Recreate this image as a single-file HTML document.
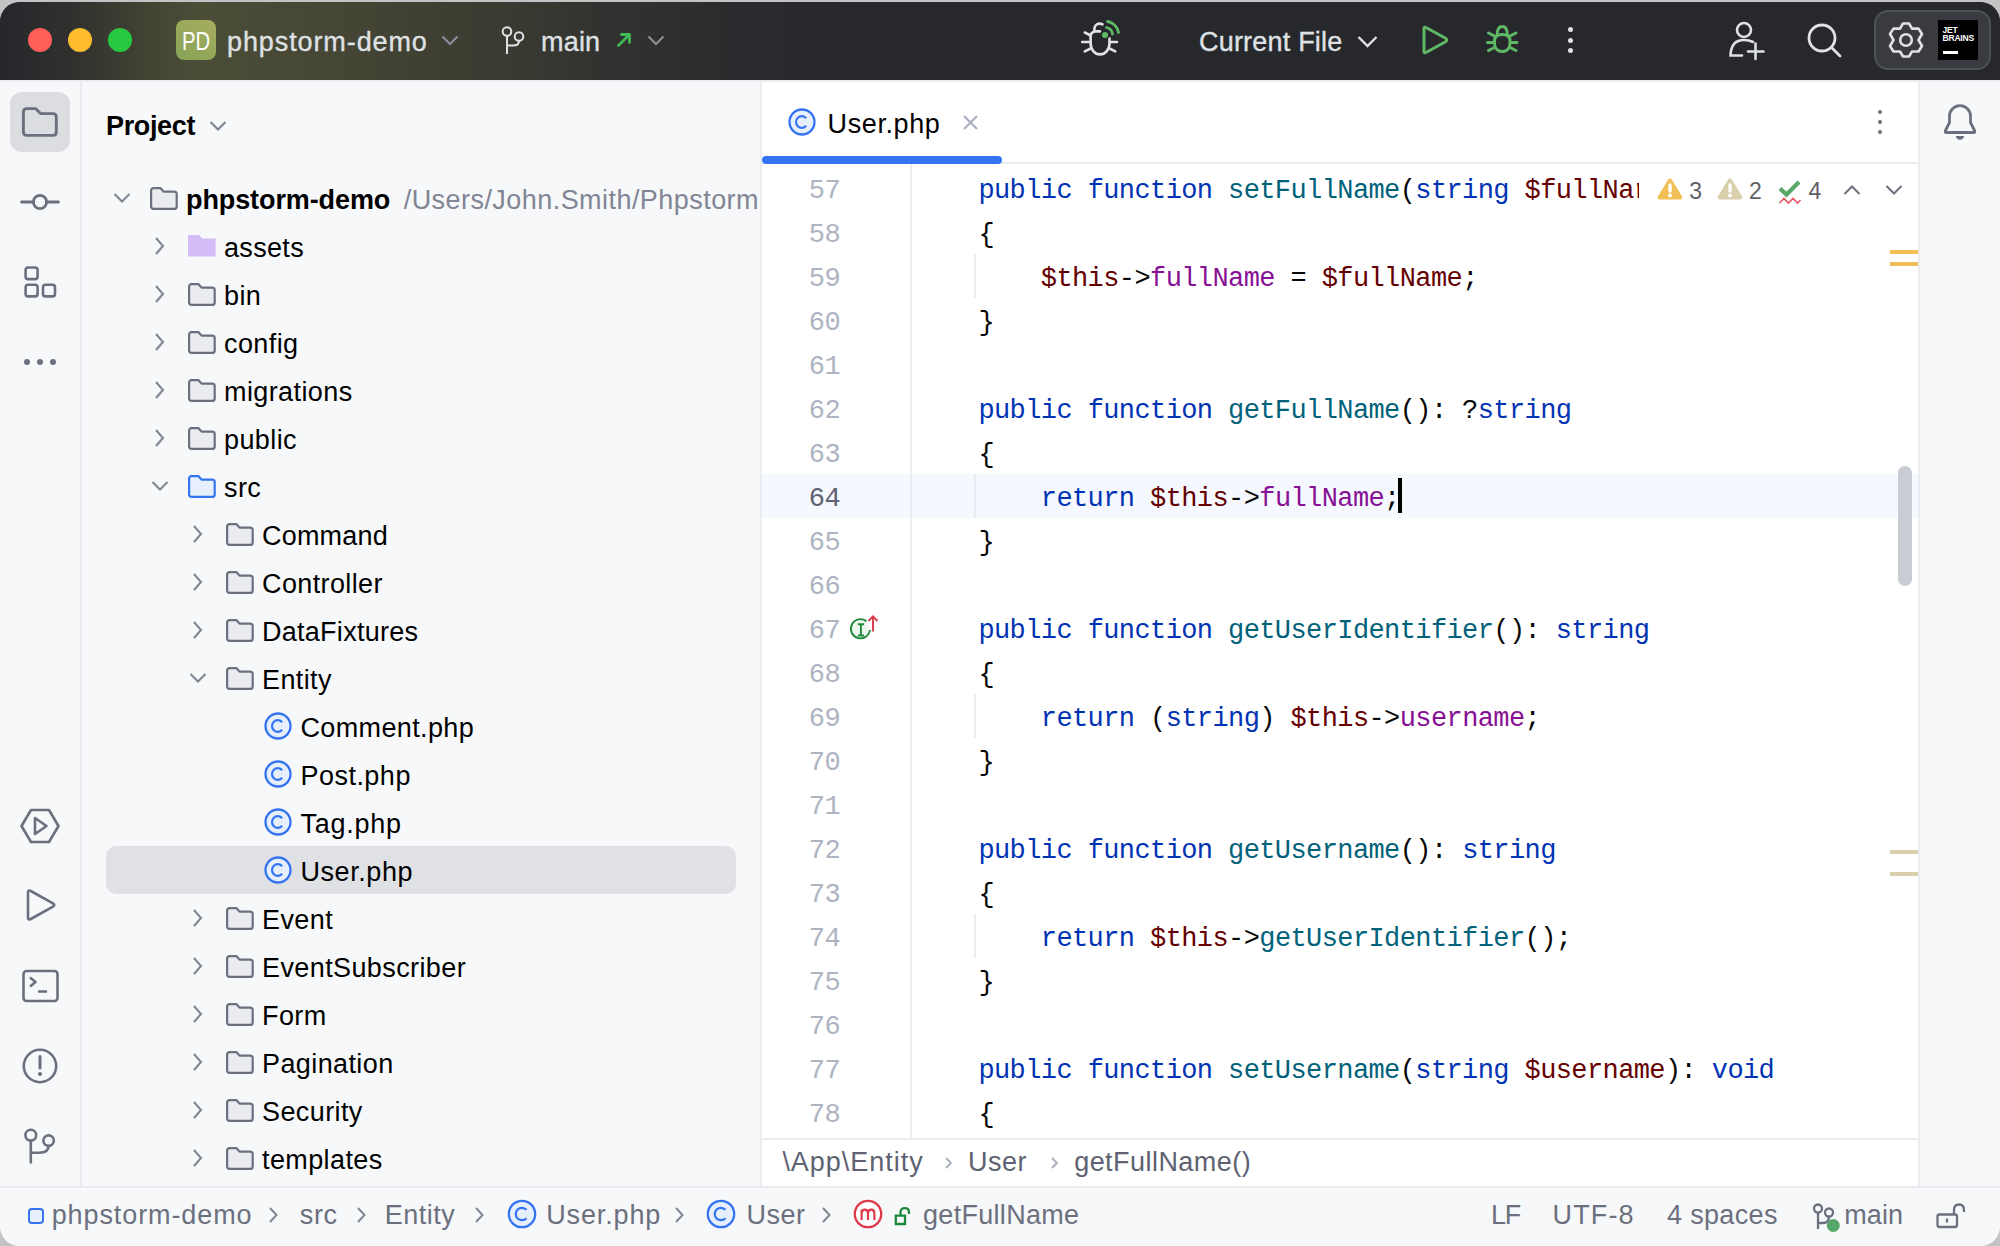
<!DOCTYPE html>
<html><head><meta charset="utf-8">
<style>
*{box-sizing:border-box;margin:0;padding:0}
html,body{width:2000px;height:1246px;overflow:hidden;background:#c3c3c5}
body{font-family:"Liberation Sans",sans-serif;position:relative}
.win{position:absolute;left:0;top:2px;width:2000px;height:1244px;border-radius:20px;overflow:hidden;background:#f7f8fa}
.abs{position:absolute}
.t{position:absolute;white-space:pre;font-size:27px;line-height:30px}
#title{position:absolute;left:0;top:-2px;width:2000px;height:80px;background:#27282c}
#titleglow{position:absolute;left:0;top:0;width:2000px;height:80px;background:linear-gradient(90deg,#26272c 0px,#2f302e 70px,#434433 150px,#4c4d37 200px,#484935 280px,#414233 400px,#3a3b31 500px,#323330 600px,#2b2c2e 720px,#27282c 850px)}
.tl{position:absolute;top:28px;width:24px;height:24px;border-radius:50%}
.lt{color:#dfe1e5;-webkit-text-stroke:0.35px #dfe1e5}
#strip{position:absolute;z-index:2;left:0;top:78px;width:82px;height:1106px;background:#f7f8fa;border-right:2px solid #ebecf0}
#proj{position:absolute;left:81px;top:78px;width:681px;height:1106px;background:#f7f8fa;border-right:2px solid #ebecf0;overflow:hidden}
#editor{position:absolute;left:762px;top:78px;width:1156px;height:1106px;background:#fff;overflow:hidden}
#rstrip{position:absolute;left:1918px;top:78px;width:82px;height:1106px;background:#f7f8fa;border-left:2px solid #ebecf0}
#status{position:absolute;left:0;top:1184px;width:2000px;height:60px;background:#f7f8fa;border-top:2px solid #ebecf0}
.tree{color:#000}
.code{position:absolute;white-space:pre;font-family:"Liberation Mono",monospace;font-size:27px;letter-spacing:-0.6px;line-height:44px;color:#080808}
.kw{color:#0033b3}.fn{color:#00627a}.va{color:#660000}.pr{color:#871094}
.ln{position:absolute;left:0;width:76px;text-align:right;font-family:"Liberation Mono",monospace;font-size:27px;letter-spacing:-0.6px;line-height:44px;color:#aeb3c2}
.st{color:#6c707e}
</style></head><body>
<div class="win">
 <div id="title"><div id="titleglow"></div>
  <div class="tl" style="left:28px;background:#ff5f57"></div>
  <div class="tl" style="left:68px;background:#febc2e"></div>
  <div class="tl" style="left:108px;background:#28c840"></div>
  <div class="abs" style="left:176px;top:20px;width:40px;height:40px;border-radius:8px;background:linear-gradient(30deg,#87a357 0%,#a7ad5e 100%)"></div>
  <div class="t" style="left:176px;top:26px;width:40px;text-align:center;color:#fff;font-size:26px;transform:scaleX(0.78);letter-spacing:0px">PD</div>
  <div class="t lt" style="left:227px;top:26.5px;letter-spacing:0.9px">phpstorm-demo</div>
  <svg class="abs" style="left:440px;top:32px" width="20" height="16" viewBox="0 0 20 16"><path d="M2.5 4.5 L10 12 L17.5 4.5" fill="none" stroke="#8b8e99" stroke-width="2.2"/></svg>
  <svg class="abs" style="left:498px;top:24px" width="32" height="34" viewBox="0 0 32 34"><circle cx="9" cy="7.5" r="4.3" fill="none" stroke="#dfe1e5" stroke-width="2"/><circle cx="21" cy="12.5" r="4.3" fill="none" stroke="#dfe1e5" stroke-width="2"/><path d="M9 12 V30 M9 21.5 H15 Q21 21.5 21 17" fill="none" stroke="#dfe1e5" stroke-width="2"/></svg>
  <div class="t lt" style="left:541px;top:26.5px;letter-spacing:0.2px">main</div>
  <svg class="abs" style="left:614px;top:30px" width="20" height="20" viewBox="0 0 20 20"><path d="M4.5 15.5 L15 5 M7.5 4.5 H15.5 V12.5" fill="none" stroke="#3fb856" stroke-width="2.8" stroke-linecap="round" stroke-linejoin="round"/></svg>
  <svg class="abs" style="left:646px;top:32px" width="20" height="16" viewBox="0 0 20 16"><path d="M2.5 4.5 L10 12 L17.5 4.5" fill="none" stroke="#8b8e99" stroke-width="2.2"/></svg>

  <svg class="abs" style="left:1075px;top:15px" width="50" height="47" viewBox="0 0 50 47"><g fill="none" stroke="#dfe1e5" stroke-width="2.6" stroke-linecap="round">
 <path d="M27.5 9.3 Q21 7 19.4 13 V16.4 H25"/><path d="M19.4 16.4 Q15.6 17.5 15.6 21 V28 C15.6 35 20 39.4 25 39.4 C30 39.4 34.5 35 34.5 28 V23.5"/>
 <path d="M9.8 17.5 L15.6 20.5 M7.2 27 H15.6 M9.8 36.4 L15.6 33.5 M34.5 27 H42 M34.5 33.5 L40.3 36.4"/></g>
 <g fill="none" stroke="#5fb865" stroke-width="2.8" stroke-linecap="round"><path d="M31.5 12.5 A7.5 7.5 0 0 1 37.5 19"/><path d="M32.6 6.5 A13.5 13.5 0 0 1 43.5 17.5"/></g><circle cx="30" cy="20" r="3" fill="#5fb865"/></svg>
  <div class="t lt" style="left:1199px;top:26.5px;letter-spacing:0.2px">Current File</div>
  <svg class="abs" style="left:1356px;top:32px" width="24" height="18" viewBox="0 0 24 18"><path d="M2.5 5 L11.5 14 L20.5 5" fill="none" stroke="#dfe1e5" stroke-width="2.4"/></svg>
  <svg class="abs" style="left:1418px;top:23px" width="34" height="34" viewBox="0 0 34 34"><path d="M6 5.5 Q6 3.5 8 4.5 L28 15.5 Q29.5 17 28 18.5 L8 29.5 Q6 30.5 6 28.5 Z" fill="none" stroke="#5fb865" stroke-width="3" stroke-linejoin="round"/></svg>
  <svg class="abs" style="left:1484px;top:22px" width="36" height="34" viewBox="0 0 36 34"><g fill="none" stroke="#5fb865" stroke-width="3" stroke-linecap="round"><path d="M13.2 12.5 Q13.2 4.5 18.25 4.5 Q23.3 4.5 23.3 12.5"/><path d="M10.5 19 C10.5 14.5 13.5 12.5 18.25 12.5 C23 12.5 26 14.5 26 19 V21.5 C26 26.5 22.5 29.5 18.25 29.5 C14 29.5 10.5 26.5 10.5 21.5 Z"/><path d="M4.5 11 L10.5 14 M3.5 20.5 H10 M4.5 28.5 L10.5 25.5 M32 11 L26 14 M33 20.5 H26.5 M32 28.5 L26 25.5"/></g></svg>
  <div class="abs" style="left:1567.5px;top:27px;width:5px;height:5px;border-radius:50%;background:#dfe1e5"></div>
  <div class="abs" style="left:1567.5px;top:37.5px;width:5px;height:5px;border-radius:50%;background:#dfe1e5"></div>
  <div class="abs" style="left:1567.5px;top:48px;width:5px;height:5px;border-radius:50%;background:#dfe1e5"></div>

  <svg class="abs" style="left:1726px;top:20px" width="42" height="42" viewBox="0 0 42 42"><g fill="none" stroke="#dfe1e5" stroke-width="2.6" stroke-linecap="round"><circle cx="18" cy="10" r="7"/><path d="M27 22 Q23 20 18 20 Q5 20 4.5 35.5 H16"/><path d="M29.5 23.5 V39 M22 31.5 H37.5"/></g></svg>
  <svg class="abs" style="left:1804px;top:20px" width="42" height="42" viewBox="0 0 42 42"><g fill="none" stroke="#dfe1e5" stroke-width="2.8" stroke-linecap="round"><circle cx="18" cy="18" r="13"/><path d="M27.5 27.5 L36 36"/></g></svg>
  <div class="abs" style="left:1874px;top:10px;width:117px;height:60px;border-radius:14px;background:#393b40;border:2px solid #4e5157"></div>
  <svg class="abs" style="left:1886px;top:19px" width="42" height="42" viewBox="0 0 42 42"><g fill="none" stroke="#dfe1e5" stroke-width="2.6" stroke-linejoin="round"><path d="M17 4.5 L23 4.5 L26 9.6 L32.5 9.6 L36 15 L32.5 21 L36 27 L32.5 32.5 L26 32.5 L23 37.5 L17 37.5 L14 32.5 L7.5 32.5 L4 27 L7.5 21 L4 15 L7.5 9.6 L14 9.6 Z"/><circle cx="20" cy="21" r="5.8"/></g></svg>
  <div class="abs" style="left:1938px;top:20px;width:40px;height:40px;background:#000"></div>
  <div class="abs" style="left:1942.5px;top:25.5px;font-size:8.5px;line-height:8.4px;font-weight:700;color:#fff;letter-spacing:-0.2px">JET<br>BRAINS</div>
  <div class="abs" style="left:1943px;top:51px;width:15px;height:2.5px;background:#fff"></div>
 </div>
 <div id="strip">
  <div class="abs" style="left:10px;top:12px;width:60px;height:60px;border-radius:12px;background:#dcdde1"></div>
  <svg class="abs" style="left:20px;top:24px" width="40" height="36" viewBox="0 0 40 36"><path d="M3.4 8 Q3.4 4.6 6.8 4.6 H15.6 L20.5 9.6 H33 Q36.3 9.6 36.3 13 V28 Q36.3 31.4 33 31.4 H6.8 Q3.4 31.4 3.4 28 Z" fill="none" stroke="#6c707e" stroke-width="2.9" stroke-linejoin="round"/></svg>
  <svg class="abs" style="left:18px;top:110px" width="44" height="24" viewBox="0 0 44 24"><g fill="none" stroke="#6c707e" stroke-width="2.8" stroke-linecap="round"><circle cx="22" cy="12" r="6.6"/><path d="M3.5 12 H15.4 M28.6 12 H40.5"/></g></svg>
  <svg class="abs" style="left:20px;top:182px" width="40" height="40" viewBox="0 0 40 40"><g fill="none" stroke="#6c707e" stroke-width="2.6"><rect x="5.6" y="5.5" width="12" height="11.6" rx="2.6"/><rect x="5.6" y="22.8" width="12" height="11.6" rx="2.6"/><rect x="23" y="22.8" width="12" height="11.6" rx="2.6"/></g></svg>
  <div class="abs" style="left:24px;top:279px;width:6px;height:6px;border-radius:50%;background:#6c707e"></div>
  <div class="abs" style="left:37px;top:279px;width:6px;height:6px;border-radius:50%;background:#6c707e"></div>
  <div class="abs" style="left:50px;top:279px;width:6px;height:6px;border-radius:50%;background:#6c707e"></div>

  <svg class="abs" style="left:18px;top:726px" width="44" height="40" viewBox="0 0 44 40"><g fill="none" stroke="#6c707e" stroke-width="2.6" stroke-linejoin="round"><path d="M13 4 H31 L40.5 20 L31 36 H13 L3.5 20 Z"/><path d="M17 12 L28.5 20 L17 28 Z"/></g></svg>
  <svg class="abs" style="left:20px;top:805px" width="40" height="40" viewBox="0 0 40 40"><path d="M8 7.5 Q8 4.5 10.8 6 L33 18.3 Q35.5 20 33 21.7 L10.8 34 Q8 35.5 8 32.5 Z" fill="none" stroke="#6c707e" stroke-width="2.6" stroke-linejoin="round"/></svg>
  <svg class="abs" style="left:20px;top:886px" width="40" height="40" viewBox="0 0 40 40"><g fill="none" stroke="#6c707e" stroke-width="2.6" stroke-linejoin="round"><rect x="3.5" y="5" width="34" height="30" rx="3"/><path d="M10 11.5 L15.5 16 L10 20.5 M18 25.5 H27"/></g></svg>
  <svg class="abs" style="left:20px;top:966px" width="40" height="40" viewBox="0 0 40 40"><circle cx="20" cy="20" r="16.2" fill="none" stroke="#6c707e" stroke-width="2.6"/><path d="M20 10.5 V22" stroke="#6c707e" stroke-width="3" stroke-linecap="round"/><circle cx="20" cy="28" r="2" fill="#6c707e"/></svg>
  <svg class="abs" style="left:20px;top:1046px" width="40" height="40" viewBox="0 0 40 40"><g fill="none" stroke="#6c707e" stroke-width="2.6"><circle cx="10.8" cy="9.2" r="5.4"/><circle cx="28.6" cy="14.6" r="5.2"/><path d="M10.8 14.6 V37.5 M10.8 26.8 H19.5 Q28.6 26.8 28.6 19.8"/></g></svg>
 </div>
 <div id="proj">
<div class="t" style="left:25px;top:30.9px;font-weight:700;color:#000;letter-spacing:-0.35px">Project</div>
<svg class="abs" style="left:127px;top:39px" width="20" height="14" viewBox="0 0 20 14"><path d="M2.5 3 L10 10.5 L17.5 3" fill="none" stroke="#818594" stroke-width="2.2"/></svg>
<div class="abs" style="left:25px;top:766px;width:630px;height:48px;border-radius:10px;background:#dfe1e5"></div>
<svg class="abs" style="left:30.8px;top:111px" width="20" height="14" viewBox="0 0 20 14"><path d="M2.5 3 L10 10.5 L17.5 3" fill="none" stroke="#818594" stroke-width="2.1"/></svg>
<svg class="abs" style="left:69.4px;top:106.5px" width="28" height="23" viewBox="0 0 28 23"><path d="M1.1 3.6 Q1.1 1.1 3.6 1.1 H10.3 L13.5 4.6 H24.2 Q26.7 4.6 26.7 7.1 V19.4 Q26.7 21.9 24.2 21.9 H3.6 Q1.1 21.9 1.1 19.4 Z" fill="#ebecf0" stroke="#6c707e" stroke-width="2.2" stroke-linejoin="round"/></svg>
<div class="t" style="left:105.0px;top:105.0px;font-weight:700;color:#000;letter-spacing:-0.1px">phpstorm-demo</div>
<div class="t" style="left:322.7px;top:105.0px;color:#818594;letter-spacing:0.45px">/Users/John.Smith/Phpstorm</div>
<svg class="abs" style="left:72.2px;top:156px" width="14" height="20" viewBox="0 0 14 20"><path d="M3 2 L10 10 L3 18" fill="none" stroke="#818594" stroke-width="2.1"/></svg>
<svg class="abs" style="left:107.4px;top:154.5px" width="28" height="23" viewBox="0 0 28 23"><path d="M0 0 H11 L14.5 3.5 H27.7 V21.6 H0 Z" fill="#d4bdf6"/></svg>
<div class="t" style="left:143.0px;top:153.0px;color:#000;letter-spacing:0.33px">assets</div>
<svg class="abs" style="left:72.2px;top:204px" width="14" height="20" viewBox="0 0 14 20"><path d="M3 2 L10 10 L3 18" fill="none" stroke="#818594" stroke-width="2.1"/></svg>
<svg class="abs" style="left:107.4px;top:202.5px" width="28" height="23" viewBox="0 0 28 23"><path d="M1.1 3.6 Q1.1 1.1 3.6 1.1 H10.3 L13.5 4.6 H24.2 Q26.7 4.6 26.7 7.1 V19.4 Q26.7 21.9 24.2 21.9 H3.6 Q1.1 21.9 1.1 19.4 Z" fill="#ebecf0" stroke="#6c707e" stroke-width="2.2" stroke-linejoin="round"/></svg>
<div class="t" style="left:143.0px;top:201.0px;color:#000;letter-spacing:0.4px">bin</div>
<svg class="abs" style="left:72.2px;top:252px" width="14" height="20" viewBox="0 0 14 20"><path d="M3 2 L10 10 L3 18" fill="none" stroke="#818594" stroke-width="2.1"/></svg>
<svg class="abs" style="left:107.4px;top:250.5px" width="28" height="23" viewBox="0 0 28 23"><path d="M1.1 3.6 Q1.1 1.1 3.6 1.1 H10.3 L13.5 4.6 H24.2 Q26.7 4.6 26.7 7.1 V19.4 Q26.7 21.9 24.2 21.9 H3.6 Q1.1 21.9 1.1 19.4 Z" fill="#ebecf0" stroke="#6c707e" stroke-width="2.2" stroke-linejoin="round"/></svg>
<div class="t" style="left:143.0px;top:249.0px;color:#000;letter-spacing:0.4px">config</div>
<svg class="abs" style="left:72.2px;top:300px" width="14" height="20" viewBox="0 0 14 20"><path d="M3 2 L10 10 L3 18" fill="none" stroke="#818594" stroke-width="2.1"/></svg>
<svg class="abs" style="left:107.4px;top:298.5px" width="28" height="23" viewBox="0 0 28 23"><path d="M1.1 3.6 Q1.1 1.1 3.6 1.1 H10.3 L13.5 4.6 H24.2 Q26.7 4.6 26.7 7.1 V19.4 Q26.7 21.9 24.2 21.9 H3.6 Q1.1 21.9 1.1 19.4 Z" fill="#ebecf0" stroke="#6c707e" stroke-width="2.2" stroke-linejoin="round"/></svg>
<div class="t" style="left:143.0px;top:297.0px;color:#000;letter-spacing:0.4px">migrations</div>
<svg class="abs" style="left:72.2px;top:348px" width="14" height="20" viewBox="0 0 14 20"><path d="M3 2 L10 10 L3 18" fill="none" stroke="#818594" stroke-width="2.1"/></svg>
<svg class="abs" style="left:107.4px;top:346.5px" width="28" height="23" viewBox="0 0 28 23"><path d="M1.1 3.6 Q1.1 1.1 3.6 1.1 H10.3 L13.5 4.6 H24.2 Q26.7 4.6 26.7 7.1 V19.4 Q26.7 21.9 24.2 21.9 H3.6 Q1.1 21.9 1.1 19.4 Z" fill="#ebecf0" stroke="#6c707e" stroke-width="2.2" stroke-linejoin="round"/></svg>
<div class="t" style="left:143.0px;top:345.0px;color:#000;letter-spacing:0.4px">public</div>
<svg class="abs" style="left:68.8px;top:399px" width="20" height="14" viewBox="0 0 20 14"><path d="M2.5 3 L10 10.5 L17.5 3" fill="none" stroke="#818594" stroke-width="2.1"/></svg>
<svg class="abs" style="left:107.4px;top:394.5px" width="28" height="23" viewBox="0 0 28 23"><path d="M1.1 3.6 Q1.1 1.1 3.6 1.1 H10.3 L13.5 4.6 H24.2 Q26.7 4.6 26.7 7.1 V19.4 Q26.7 21.9 24.2 21.9 H3.6 Q1.1 21.9 1.1 19.4 Z" fill="#e7effd" stroke="#3574f0" stroke-width="2.2" stroke-linejoin="round"/></svg>
<div class="t" style="left:143.0px;top:393.0px;color:#000;letter-spacing:0.4px">src</div>
<svg class="abs" style="left:110.2px;top:444px" width="14" height="20" viewBox="0 0 14 20"><path d="M3 2 L10 10 L3 18" fill="none" stroke="#818594" stroke-width="2.1"/></svg>
<svg class="abs" style="left:145.4px;top:442.5px" width="28" height="23" viewBox="0 0 28 23"><path d="M1.1 3.6 Q1.1 1.1 3.6 1.1 H10.3 L13.5 4.6 H24.2 Q26.7 4.6 26.7 7.1 V19.4 Q26.7 21.9 24.2 21.9 H3.6 Q1.1 21.9 1.1 19.4 Z" fill="#ebecf0" stroke="#6c707e" stroke-width="2.2" stroke-linejoin="round"/></svg>
<div class="t" style="left:181.0px;top:441.0px;color:#000;letter-spacing:0.2px">Command</div>
<svg class="abs" style="left:110.2px;top:492px" width="14" height="20" viewBox="0 0 14 20"><path d="M3 2 L10 10 L3 18" fill="none" stroke="#818594" stroke-width="2.1"/></svg>
<svg class="abs" style="left:145.4px;top:490.5px" width="28" height="23" viewBox="0 0 28 23"><path d="M1.1 3.6 Q1.1 1.1 3.6 1.1 H10.3 L13.5 4.6 H24.2 Q26.7 4.6 26.7 7.1 V19.4 Q26.7 21.9 24.2 21.9 H3.6 Q1.1 21.9 1.1 19.4 Z" fill="#ebecf0" stroke="#6c707e" stroke-width="2.2" stroke-linejoin="round"/></svg>
<div class="t" style="left:181.0px;top:489.0px;color:#000;letter-spacing:0.38px">Controller</div>
<svg class="abs" style="left:110.2px;top:540px" width="14" height="20" viewBox="0 0 14 20"><path d="M3 2 L10 10 L3 18" fill="none" stroke="#818594" stroke-width="2.1"/></svg>
<svg class="abs" style="left:145.4px;top:538.5px" width="28" height="23" viewBox="0 0 28 23"><path d="M1.1 3.6 Q1.1 1.1 3.6 1.1 H10.3 L13.5 4.6 H24.2 Q26.7 4.6 26.7 7.1 V19.4 Q26.7 21.9 24.2 21.9 H3.6 Q1.1 21.9 1.1 19.4 Z" fill="#ebecf0" stroke="#6c707e" stroke-width="2.2" stroke-linejoin="round"/></svg>
<div class="t" style="left:181.0px;top:537.0px;color:#000;letter-spacing:0.27px">DataFixtures</div>
<svg class="abs" style="left:106.8px;top:591px" width="20" height="14" viewBox="0 0 20 14"><path d="M2.5 3 L10 10.5 L17.5 3" fill="none" stroke="#818594" stroke-width="2.1"/></svg>
<svg class="abs" style="left:145.4px;top:586.5px" width="28" height="23" viewBox="0 0 28 23"><path d="M1.1 3.6 Q1.1 1.1 3.6 1.1 H10.3 L13.5 4.6 H24.2 Q26.7 4.6 26.7 7.1 V19.4 Q26.7 21.9 24.2 21.9 H3.6 Q1.1 21.9 1.1 19.4 Z" fill="#ebecf0" stroke="#6c707e" stroke-width="2.2" stroke-linejoin="round"/></svg>
<div class="t" style="left:181.0px;top:585.0px;color:#000;letter-spacing:0.39px">Entity</div>
<svg class="abs" style="left:183px;top:632px" width="28" height="28" viewBox="0 0 28 28"><circle cx="14" cy="14" r="12.5" fill="#e7effd" stroke="#3574f0" stroke-width="2.3"/><path d="M18.2 10.2 A5.8 5.8 0 1 0 18.2 17.8" fill="none" stroke="#3574f0" stroke-width="2.2"/></svg>
<div class="t" style="left:219.4px;top:633.0px;color:#000;letter-spacing:0.38px">Comment.php</div>
<svg class="abs" style="left:183px;top:680px" width="28" height="28" viewBox="0 0 28 28"><circle cx="14" cy="14" r="12.5" fill="#e7effd" stroke="#3574f0" stroke-width="2.3"/><path d="M18.2 10.2 A5.8 5.8 0 1 0 18.2 17.8" fill="none" stroke="#3574f0" stroke-width="2.2"/></svg>
<div class="t" style="left:219.4px;top:681.0px;color:#000;letter-spacing:0.49px">Post.php</div>
<svg class="abs" style="left:183px;top:728px" width="28" height="28" viewBox="0 0 28 28"><circle cx="14" cy="14" r="12.5" fill="#e7effd" stroke="#3574f0" stroke-width="2.3"/><path d="M18.2 10.2 A5.8 5.8 0 1 0 18.2 17.8" fill="none" stroke="#3574f0" stroke-width="2.2"/></svg>
<div class="t" style="left:219.4px;top:729.0px;color:#000;letter-spacing:0.74px">Tag.php</div>
<svg class="abs" style="left:183px;top:776px" width="28" height="28" viewBox="0 0 28 28"><circle cx="14" cy="14" r="12.5" fill="#e7effd" stroke="#3574f0" stroke-width="2.3"/><path d="M18.2 10.2 A5.8 5.8 0 1 0 18.2 17.8" fill="none" stroke="#3574f0" stroke-width="2.2"/></svg>
<div class="t" style="left:219.4px;top:777.0px;color:#000;letter-spacing:0.59px">User.php</div>
<svg class="abs" style="left:110.2px;top:828px" width="14" height="20" viewBox="0 0 14 20"><path d="M3 2 L10 10 L3 18" fill="none" stroke="#818594" stroke-width="2.1"/></svg>
<svg class="abs" style="left:145.4px;top:826.5px" width="28" height="23" viewBox="0 0 28 23"><path d="M1.1 3.6 Q1.1 1.1 3.6 1.1 H10.3 L13.5 4.6 H24.2 Q26.7 4.6 26.7 7.1 V19.4 Q26.7 21.9 24.2 21.9 H3.6 Q1.1 21.9 1.1 19.4 Z" fill="#ebecf0" stroke="#6c707e" stroke-width="2.2" stroke-linejoin="round"/></svg>
<div class="t" style="left:181.0px;top:825.0px;color:#000;letter-spacing:0.4px">Event</div>
<svg class="abs" style="left:110.2px;top:876px" width="14" height="20" viewBox="0 0 14 20"><path d="M3 2 L10 10 L3 18" fill="none" stroke="#818594" stroke-width="2.1"/></svg>
<svg class="abs" style="left:145.4px;top:874.5px" width="28" height="23" viewBox="0 0 28 23"><path d="M1.1 3.6 Q1.1 1.1 3.6 1.1 H10.3 L13.5 4.6 H24.2 Q26.7 4.6 26.7 7.1 V19.4 Q26.7 21.9 24.2 21.9 H3.6 Q1.1 21.9 1.1 19.4 Z" fill="#ebecf0" stroke="#6c707e" stroke-width="2.2" stroke-linejoin="round"/></svg>
<div class="t" style="left:181.0px;top:873.0px;color:#000;letter-spacing:0.4px">EventSubscriber</div>
<svg class="abs" style="left:110.2px;top:924px" width="14" height="20" viewBox="0 0 14 20"><path d="M3 2 L10 10 L3 18" fill="none" stroke="#818594" stroke-width="2.1"/></svg>
<svg class="abs" style="left:145.4px;top:922.5px" width="28" height="23" viewBox="0 0 28 23"><path d="M1.1 3.6 Q1.1 1.1 3.6 1.1 H10.3 L13.5 4.6 H24.2 Q26.7 4.6 26.7 7.1 V19.4 Q26.7 21.9 24.2 21.9 H3.6 Q1.1 21.9 1.1 19.4 Z" fill="#ebecf0" stroke="#6c707e" stroke-width="2.2" stroke-linejoin="round"/></svg>
<div class="t" style="left:181.0px;top:921.0px;color:#000;letter-spacing:0.4px">Form</div>
<svg class="abs" style="left:110.2px;top:972px" width="14" height="20" viewBox="0 0 14 20"><path d="M3 2 L10 10 L3 18" fill="none" stroke="#818594" stroke-width="2.1"/></svg>
<svg class="abs" style="left:145.4px;top:970.5px" width="28" height="23" viewBox="0 0 28 23"><path d="M1.1 3.6 Q1.1 1.1 3.6 1.1 H10.3 L13.5 4.6 H24.2 Q26.7 4.6 26.7 7.1 V19.4 Q26.7 21.9 24.2 21.9 H3.6 Q1.1 21.9 1.1 19.4 Z" fill="#ebecf0" stroke="#6c707e" stroke-width="2.2" stroke-linejoin="round"/></svg>
<div class="t" style="left:181.0px;top:969.0px;color:#000;letter-spacing:0.4px">Pagination</div>
<svg class="abs" style="left:110.2px;top:1020px" width="14" height="20" viewBox="0 0 14 20"><path d="M3 2 L10 10 L3 18" fill="none" stroke="#818594" stroke-width="2.1"/></svg>
<svg class="abs" style="left:145.4px;top:1018.5px" width="28" height="23" viewBox="0 0 28 23"><path d="M1.1 3.6 Q1.1 1.1 3.6 1.1 H10.3 L13.5 4.6 H24.2 Q26.7 4.6 26.7 7.1 V19.4 Q26.7 21.9 24.2 21.9 H3.6 Q1.1 21.9 1.1 19.4 Z" fill="#ebecf0" stroke="#6c707e" stroke-width="2.2" stroke-linejoin="round"/></svg>
<div class="t" style="left:181.0px;top:1017.0px;color:#000;letter-spacing:0.4px">Security</div>
<svg class="abs" style="left:110.2px;top:1068px" width="14" height="20" viewBox="0 0 14 20"><path d="M3 2 L10 10 L3 18" fill="none" stroke="#818594" stroke-width="2.1"/></svg>
<svg class="abs" style="left:145.4px;top:1066.5px" width="28" height="23" viewBox="0 0 28 23"><path d="M1.1 3.6 Q1.1 1.1 3.6 1.1 H10.3 L13.5 4.6 H24.2 Q26.7 4.6 26.7 7.1 V19.4 Q26.7 21.9 24.2 21.9 H3.6 Q1.1 21.9 1.1 19.4 Z" fill="#ebecf0" stroke="#6c707e" stroke-width="2.2" stroke-linejoin="round"/></svg>
<div class="t" style="left:181.0px;top:1065.0px;color:#000;letter-spacing:0.4px">templates</div>
</div>
 <div id="editor">
<div class="abs" style="left:0;top:82px;width:1156px;height:2px;background:#ebecf0"></div>
<div class="abs" style="left:0;top:76px;width:240px;height:8px;border-radius:4px;background:#3574f0"></div>
<svg class="abs" style="left:26px;top:28px" width="28" height="28" viewBox="0 0 28 28"><circle cx="14" cy="14" r="12.5" fill="#e7effd" stroke="#3574f0" stroke-width="2.3"/><path d="M18.2 10.2 A5.8 5.8 0 1 0 18.2 17.8" fill="none" stroke="#3574f0" stroke-width="2.2"/></svg>
<div class="t" style="left:65.6px;top:28.9px;color:#000;letter-spacing:0.6px">User.php</div>
<svg class="abs" style="left:200px;top:34px" width="17" height="17" viewBox="0 0 17 17"><path d="M2 2 L15 15 M15 2 L2 15" stroke="#a8adbd" stroke-width="2"/></svg>
<div class="abs" style="left:1115.75px;top:29.75px;width:4.5px;height:4.5px;border-radius:50%;background:#6c707e"></div>
<div class="abs" style="left:1115.75px;top:39.75px;width:4.5px;height:4.5px;border-radius:50%;background:#6c707e"></div>
<div class="abs" style="left:1115.75px;top:49.75px;width:4.5px;height:4.5px;border-radius:50%;background:#6c707e"></div>
<div class="abs" style="left:0;top:394px;width:1156px;height:44px;background:#f5f8fe"></div>
<div class="abs" style="left:148px;top:84px;width:2px;height:974px;background:#ebecf0"></div>
<div class="abs" style="left:212px;top:174px;width:2px;height:44px;background:#ebecf0"></div>
<div class="abs" style="left:212px;top:394px;width:2px;height:44px;background:#ebecf0"></div>
<div class="abs" style="left:212px;top:614px;width:2px;height:44px;background:#ebecf0"></div>
<div class="abs" style="left:212px;top:834px;width:2px;height:44px;background:#ebecf0"></div>
<div class="code" style="left:46.8px;top:89.1px;color:#aeb3c2">57</div>
<div class="code" style="left:46.8px;top:133.1px;color:#aeb3c2">58</div>
<div class="code" style="left:46.8px;top:177.1px;color:#aeb3c2">59</div>
<div class="code" style="left:46.8px;top:221.1px;color:#aeb3c2">60</div>
<div class="code" style="left:46.8px;top:265.1px;color:#aeb3c2">61</div>
<div class="code" style="left:46.8px;top:309.1px;color:#aeb3c2">62</div>
<div class="code" style="left:46.8px;top:353.1px;color:#aeb3c2">63</div>
<div class="code" style="left:46.8px;top:397.1px;color:#5e6272">64</div>
<div class="code" style="left:46.8px;top:441.1px;color:#aeb3c2">65</div>
<div class="code" style="left:46.8px;top:485.1px;color:#aeb3c2">66</div>
<div class="code" style="left:46.8px;top:529.1px;color:#aeb3c2">67</div>
<div class="code" style="left:46.8px;top:573.1px;color:#aeb3c2">68</div>
<div class="code" style="left:46.8px;top:617.1px;color:#aeb3c2">69</div>
<div class="code" style="left:46.8px;top:661.1px;color:#aeb3c2">70</div>
<div class="code" style="left:46.8px;top:705.1px;color:#aeb3c2">71</div>
<div class="code" style="left:46.8px;top:749.1px;color:#aeb3c2">72</div>
<div class="code" style="left:46.8px;top:793.1px;color:#aeb3c2">73</div>
<div class="code" style="left:46.8px;top:837.1px;color:#aeb3c2">74</div>
<div class="code" style="left:46.8px;top:881.1px;color:#aeb3c2">75</div>
<div class="code" style="left:46.8px;top:925.1px;color:#aeb3c2">76</div>
<div class="code" style="left:46.8px;top:969.1px;color:#aeb3c2">77</div>
<div class="code" style="left:46.8px;top:1013.1px;color:#aeb3c2">78</div>
<div class="code" style="left:216.4px;top:89.1px"><span class="kw">public</span> <span class="kw">function</span> <span class="fn">setFullName</span>(<span class="kw">string</span> <span class="va">$fullNar</span></div>
<div class="code" style="left:216.4px;top:133.1px">{</div>
<div class="code" style="left:216.4px;top:177.1px">    <span class="va">$this</span>-><span class="pr">fullName</span> = <span class="va">$fullName</span>;</div>
<div class="code" style="left:216.4px;top:221.1px">}</div>
<div class="code" style="left:216.4px;top:309.1px"><span class="kw">public</span> <span class="kw">function</span> <span class="fn">getFullName</span>(): ?<span class="kw">string</span></div>
<div class="code" style="left:216.4px;top:353.1px">{</div>
<div class="code" style="left:216.4px;top:397.1px">    <span class="kw">return</span> <span class="va">$this</span>-><span class="pr">fullName</span>;</div>
<div class="code" style="left:216.4px;top:441.1px">}</div>
<div class="code" style="left:216.4px;top:529.1px"><span class="kw">public</span> <span class="kw">function</span> <span class="fn">getUserIdentifier</span>(): <span class="kw">string</span></div>
<div class="code" style="left:216.4px;top:573.1px">{</div>
<div class="code" style="left:216.4px;top:617.1px">    <span class="kw">return</span> (<span class="kw">string</span>) <span class="va">$this</span>-><span class="pr">username</span>;</div>
<div class="code" style="left:216.4px;top:661.1px">}</div>
<div class="code" style="left:216.4px;top:749.1px"><span class="kw">public</span> <span class="kw">function</span> <span class="fn">getUsername</span>(): <span class="kw">string</span></div>
<div class="code" style="left:216.4px;top:793.1px">{</div>
<div class="code" style="left:216.4px;top:837.1px">    <span class="kw">return</span> <span class="va">$this</span>-><span class="fn">getUserIdentifier</span>();</div>
<div class="code" style="left:216.4px;top:881.1px">}</div>
<div class="code" style="left:216.4px;top:969.1px"><span class="kw">public</span> <span class="kw">function</span> <span class="fn">setUsername</span>(<span class="kw">string</span> <span class="va">$username</span>): <span class="kw">void</span></div>
<div class="code" style="left:216.4px;top:1013.1px">{</div>
<div class="abs" style="left:636px;top:398px;width:4px;height:35px;background:#000"></div>
<svg class="abs" style="left:84px;top:531.5px" width="36" height="32" viewBox="0 0 36 32"><path d="M20.5 9.3 A9.6 9.6 0 1 0 24 18" fill="#eef8f0" stroke="#208a3c" stroke-width="1.9"/><path d="M11.8 12.3 H18 M14.9 12.3 V23.5 M11.8 23.5 H18" fill="none" stroke="#208a3c" stroke-width="1.9"/><path d="M27 19.6 V5 M22.5 9 L27 4.4 L31.5 9" fill="none" stroke="#db3b4b" stroke-width="1.9"/></svg>
<div class="abs" style="left:877px;top:90px;width:276px;height:40px;background:#fff"></div>
<svg class="abs" style="left:894px;top:96px" width="28" height="26" viewBox="0 0 28 26"><path d="M14 4.6 L24.2 21.4 H3.8 Z" fill="#f2bf57" stroke="#f2bf57" stroke-width="4.2" stroke-linejoin="round"/><path d="M14 9 V15" stroke="#fff" stroke-width="3.4" stroke-linecap="round"/><circle cx="14" cy="19.6" r="2" fill="#fff"/></svg>
<svg class="abs" style="left:954px;top:96px" width="28" height="26" viewBox="0 0 28 26"><path d="M14 4.6 L24.2 21.4 H3.8 Z" fill="#d9cfab" stroke="#d9cfab" stroke-width="4.2" stroke-linejoin="round"/><path d="M14 9 V15" stroke="#fff" stroke-width="3.4" stroke-linecap="round"/><circle cx="14" cy="19.6" r="2" fill="#fff"/></svg>
<div class="t" style="left:927.3px;top:98.8px;font-size:23px;line-height:24px;color:#5f6163">3</div>
<div class="t" style="left:986.9px;top:98.8px;font-size:23px;line-height:24px;color:#5f6163">2</div>
<div class="t" style="left:1046.5px;top:98.8px;font-size:23px;line-height:24px;color:#5f6163">4</div>
<svg class="abs" style="left:1014px;top:96px" width="28" height="30" viewBox="0 0 28 30"><path d="M4 12.5 L10.5 18.5 L23 6" fill="none" stroke="#59a869" stroke-width="4.2"/><path d="M3.5 27 L8 22.5 L12.5 27 L17 22.5 L21.5 27 L24.5 24" fill="none" stroke="#e55765" stroke-width="1.6"/></svg>
<svg class="abs" style="left:1080px;top:102px" width="20" height="16" viewBox="0 0 20 16"><path d="M2.5 12 L10 4.5 L17.5 12" fill="none" stroke="#6c707e" stroke-width="2"/></svg>
<svg class="abs" style="left:1122px;top:102px" width="20" height="16" viewBox="0 0 20 16"><path d="M2.5 4 L10 11.5 L17.5 4" fill="none" stroke="#6c707e" stroke-width="2"/></svg>
<div class="abs" style="left:1128px;top:170px;width:28px;height:4px;background:#f2bf57"></div>
<div class="abs" style="left:1128px;top:182px;width:28px;height:4px;background:#f2bf57"></div>
<div class="abs" style="left:1128px;top:770px;width:28px;height:4px;background:#d9cfab"></div>
<div class="abs" style="left:1128px;top:792px;width:28px;height:4px;background:#d9cfab"></div>
<div class="abs" style="left:1136px;top:386px;width:14px;height:120px;border-radius:7px;background:#c9ccd3"></div>
<div class="abs" style="left:0;top:1058px;width:1156px;height:48px;background:#fff;border-top:2px solid #ebecf0"></div>
<div class="t" style="left:20.4px;top:1067.4px;color:#5e6272;letter-spacing:0.97px">\App\Entity</div>
<div class="t" style="left:206.0px;top:1067.4px;color:#5e6272;letter-spacing:0.5px">User</div>
<div class="t" style="left:312.2px;top:1067.4px;color:#5e6272;letter-spacing:0.45px">getFullName()</div>
<svg class="abs" style="left:182px;top:1076px" width="10" height="14" viewBox="0 0 10 14"><path d="M2 2 L7 7 L2 12" fill="none" stroke="#a8adbd" stroke-width="1.8"/></svg>
<svg class="abs" style="left:288px;top:1076px" width="10" height="14" viewBox="0 0 10 14"><path d="M2 2 L7 7 L2 12" fill="none" stroke="#a8adbd" stroke-width="1.8"/></svg>
</div>
 <div id="rstrip">
  <svg class="abs" style="left:20px;top:22px" width="40" height="40" viewBox="0 0 40 40"><path d="M9.5 14.2 A10.5 10.5 0 0 1 30.5 14.2 V20.5 L34.5 28.5 Q35.5 30.5 33.5 30.5 H6.5 Q4.5 30.5 5.5 28.5 L9.5 20.5 Z" fill="none" stroke="#6c707e" stroke-width="2.8" stroke-linejoin="round"/><path d="M15.8 34 H24.2 Q23.5 37.8 20 37.8 Q16.5 37.8 15.8 34 Z" fill="#6c707e"/></svg>
 </div>
 <div class="abs" style="left:0;top:78px;width:2000px;height:2px;background:#ebecf0;z-index:3"></div>
<div id="status">
<div class="abs" style="left:28px;top:20px;width:16px;height:15.5px;border-radius:4px;border:2.3px solid #3574f0;background:#e7effd"></div>
<div class="t st" style="left:51.7px;top:12.2px;letter-spacing:0.9px">phpstorm-demo</div>
<svg class="abs" style="left:267.0px;top:16.5px" width="14" height="20" viewBox="0 0 14 20"><path d="M3 3 L9.5 10 L3 17" fill="none" stroke="#818594" stroke-width="2"/></svg>
<svg class="abs" style="left:355.0px;top:16.5px" width="14" height="20" viewBox="0 0 14 20"><path d="M3 3 L9.5 10 L3 17" fill="none" stroke="#818594" stroke-width="2"/></svg>
<svg class="abs" style="left:473.3px;top:16.5px" width="14" height="20" viewBox="0 0 14 20"><path d="M3 3 L9.5 10 L3 17" fill="none" stroke="#818594" stroke-width="2"/></svg>
<svg class="abs" style="left:673.0px;top:16.5px" width="14" height="20" viewBox="0 0 14 20"><path d="M3 3 L9.5 10 L3 17" fill="none" stroke="#818594" stroke-width="2"/></svg>
<svg class="abs" style="left:819.8px;top:16.5px" width="14" height="20" viewBox="0 0 14 20"><path d="M3 3 L9.5 10 L3 17" fill="none" stroke="#818594" stroke-width="2"/></svg>
<div class="t st" style="left:299.8px;top:12.2px;letter-spacing:0.65px">src</div>
<div class="t st" style="left:384.7px;top:12.2px;letter-spacing:0.53px">Entity</div>
<svg class="abs" style="left:506.6px;top:10.5px" width="30" height="30" viewBox="0 0 30 30"><circle cx="15" cy="15" r="13.2" fill="#e7effd" stroke="#3574f0" stroke-width="2.3"/><path d="M19.5 10.8 A6.2 6.2 0 1 0 19.5 19.2" fill="none" stroke="#3574f0" stroke-width="2.2"/></svg>
<div class="t st" style="left:546.2px;top:12.2px;letter-spacing:0.86px">User.php</div>
<svg class="abs" style="left:706.4px;top:10.5px" width="30" height="30" viewBox="0 0 30 30"><circle cx="15" cy="15" r="13.2" fill="#e7effd" stroke="#3574f0" stroke-width="2.3"/><path d="M19.5 10.8 A6.2 6.2 0 1 0 19.5 19.2" fill="none" stroke="#3574f0" stroke-width="2.2"/></svg>
<div class="t st" style="left:746.4px;top:12.2px;letter-spacing:0.53px">User</div>
<svg class="abs" style="left:853.2px;top:10.5px" width="30" height="30" viewBox="0 0 30 30"><circle cx="15" cy="15" r="13.2" fill="#fff" stroke="#db3b4b" stroke-width="2.3"/><path d="M8.6 21 V10.8 M8.6 14.2 Q8.6 10.6 11.8 10.6 Q15 10.6 15 14.2 V21 M15 14.2 Q15 10.6 18.2 10.6 Q21.4 10.6 21.4 14.2 V21" fill="none" stroke="#db3b4b" stroke-width="2.2"/></svg>
<svg class="abs" style="left:892px;top:18px" width="22" height="20" viewBox="0 0 22 20"><path d="M3.8 9.6 H13 V18 H3.8 Z" fill="none" stroke="#208a3c" stroke-width="2.3"/><path d="M8.5 9.6 V6.5 Q8.5 2.2 12.8 2.2 Q17 2.2 17 6.5 V8" fill="none" stroke="#208a3c" stroke-width="2.3"/></svg>
<div class="t st" style="left:923.0px;top:12.2px;letter-spacing:0.3px">getFullName</div>
<div class="t st" style="left:1491.0px;top:12.2px;letter-spacing:-1.3px">LF</div>
<div class="t st" style="left:1552.6px;top:12.2px;letter-spacing:1.1px">UTF-8</div>
<div class="t st" style="left:1667.0px;top:12.2px;letter-spacing:0.33px">4 spaces</div>
<svg class="abs" style="left:1810px;top:14.25px" width="36" height="34" viewBox="0 0 36 34"><g fill="none" stroke="#6c707e" stroke-width="2.3"><circle cx="8" cy="6.5" r="4"/><circle cx="19" cy="10.5" r="4"/><path d="M8 10.5 V27 M8 21 H13 Q19 21 19 14.5"/></g><circle cx="23.3" cy="23.5" r="6.5" fill="#55a76a"/></svg>
<div class="t st" style="left:1844.3px;top:12.2px;letter-spacing:0.06px">main</div>
<svg class="abs" style="left:1934px;top:12px" width="34" height="30" viewBox="0 0 34 30"><path d="M5.5 14.5 H21 Q23 14.5 23 16.5 V25 Q23 27 21 27 H5.5 Q3.5 27 3.5 25 V16.5 Q3.5 14.5 5.5 14.5 Z" fill="none" stroke="#6c707e" stroke-width="2.3"/><path d="M13 18.5 V22.5" stroke="#6c707e" stroke-width="2.3"/><path d="M20 14.5 V10 Q20 4.5 25 4.5 Q30 4.5 30 10 V12" fill="none" stroke="#6c707e" stroke-width="2.3"/></svg>
</div>
</div>
</body></html>
